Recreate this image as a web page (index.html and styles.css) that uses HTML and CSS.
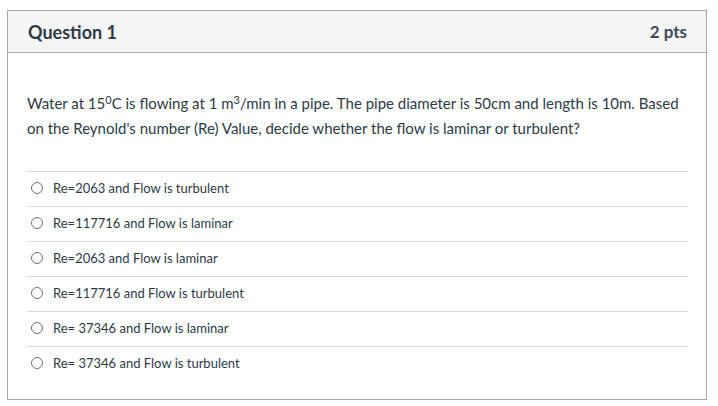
FILE: index.html
```html
<!DOCTYPE html>
<html>
<head>
<meta charset="utf-8">
<link rel="stylesheet" href="styles.css">
</head>
<body>
<div class="quiz">
  <div class="header">
    <span class="title">Question 1</span>
    <span class="pts">2 pts</span>
  </div>
  <div class="content">
    <p class="question">Water at 15<sup>0</sup>C is flowing at 1 m<sup>3</sup>/min in a pipe. The pipe diameter is 50cm and length is 10m. Based on the Reynold's number (Re) Value, decide whether the flow is laminar or turbulent?</p>
    <ul class="answers">
      <li class="answer"><span class="radio"></span><span>Re=2063 and Flow is turbulent</span></li>
      <li class="answer"><span class="radio"></span><span>Re=117716 and Flow is laminar</span></li>
      <li class="answer"><span class="radio"></span><span>Re=2063 and Flow is laminar</span></li>
      <li class="answer"><span class="radio"></span><span>Re=117716 and Flow is turbulent</span></li>
      <li class="answer"><span class="radio"></span><span>Re= 37346 and Flow is laminar</span></li>
      <li class="answer"><span class="radio"></span><span>Re= 37346 and Flow is turbulent</span></li>
    </ul>
  </div>
</div>
</body>
</html>
```
FILE: styles.css
```css
html, body {
  margin: 0;
  padding: 0;
  background: #fff;
}
body {
  font-family: Lato, "Open Sans", sans-serif;
  color: #2d3b45;
}
.quiz {
  box-sizing: border-box;
  width: 700px;
  height: 390px;
  margin: 10px 0 0 7px;
  border: 1px solid #a8a8a8;
}
.header {
  box-sizing: border-box;
  height: 42px;
  background: #f5f5f5;
  border-bottom: 1px solid #a8a8a8;
  display: flex;
  justify-content: space-between;
  align-items: center;
  padding: 0 19px 0 20px;
}
.title {
  font-size: 18px;
  font-weight: 700;
}
.pts {
  font-size: 17px;
  font-weight: 700;
  color: #3d4a54;
}
.content {
  padding: 0 18px 0 19px;
}
.question {
  margin: 38px 0 0;
  font-size: 15px;
  line-height: 25px;
}
.question sup {
  font-size: 11px;
  line-height: 0;
  vertical-align: 5px;
}
.answers {
  list-style: none;
  margin: 30px 0 0;
  padding: 0;
}
.answer {
  box-sizing: border-box;
  height: 35px;
  border-top: 1px solid #dcdcdc;
  display: flex;
  align-items: center;
  gap: 10px;
  padding: 0 0 3px 4px;
  font-size: 13px;
}
.radio {
  box-sizing: border-box;
  width: 12px;
  height: 12px;
  border: 1px solid #6e6e6e;
  border-radius: 50%;
  flex: none;
}
```
